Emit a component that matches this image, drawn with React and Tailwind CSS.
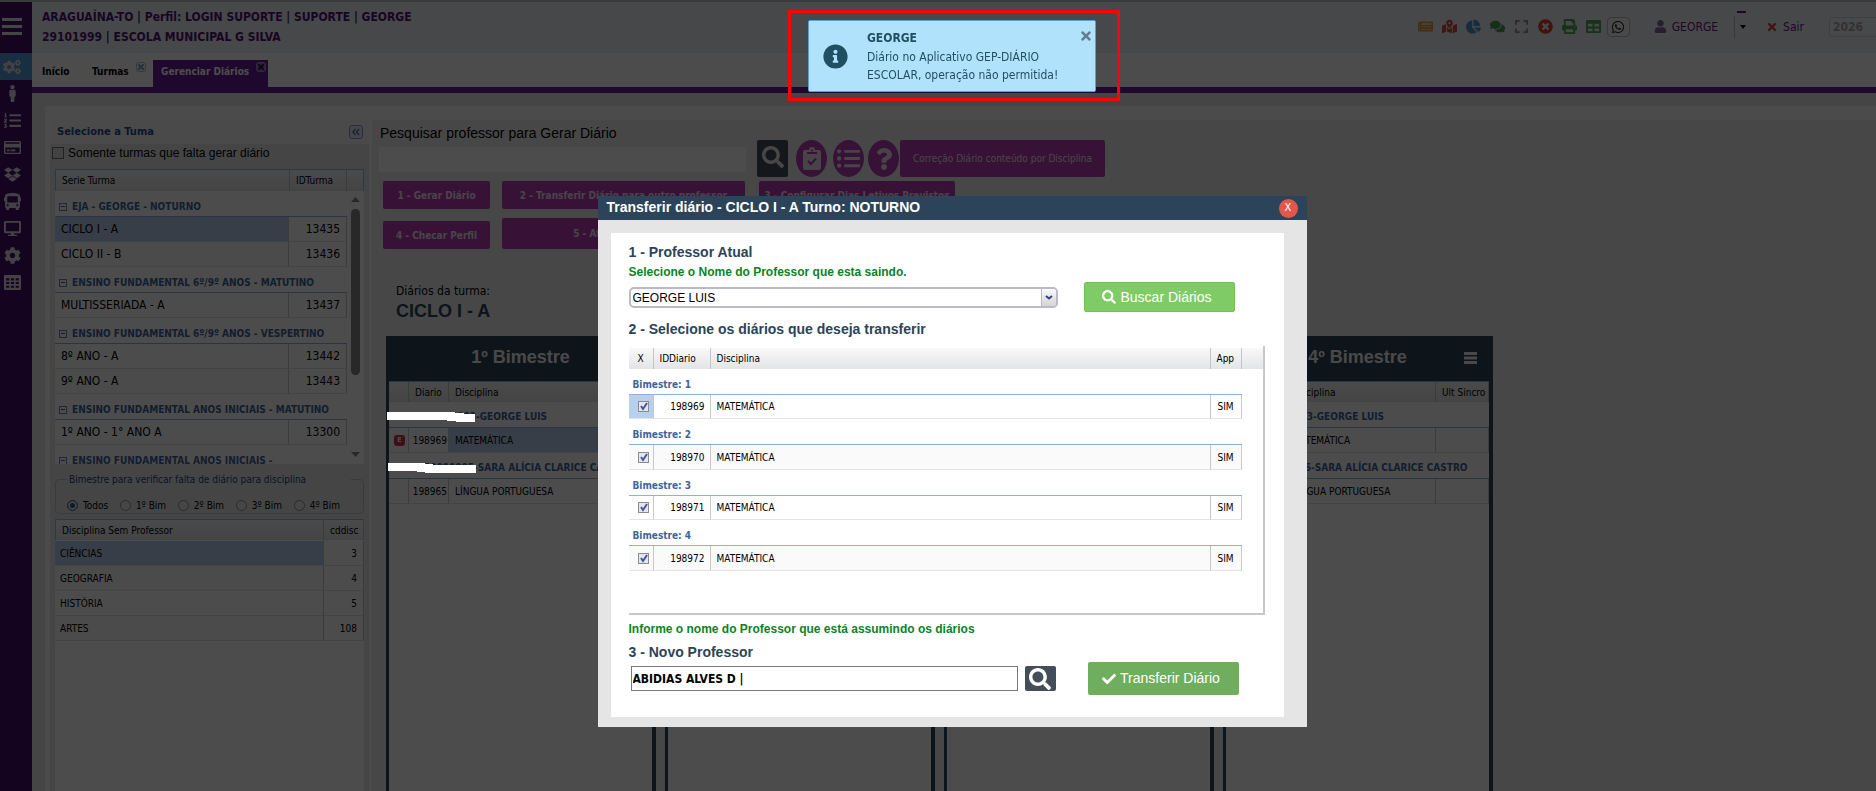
import React from "react";
import {
  FaCogs, FaMale, FaListOl, FaRegCreditCard, FaDropbox, FaBus, FaDesktop, FaCog, FaTable,
  FaNewspaper, FaMapMarkedAlt, FaChartPie, FaComments, FaExpand, FaTimesCircle, FaPrint,
  FaWhatsapp, FaUser, FaTimes, FaSearch, FaCheck, FaListUl, FaQuestion, FaInfoCircle,
} from "react-icons/fa";

const tahoma = "font-['DejaVu_Sans_Condensed','DejaVu_Sans',sans-serif]";
const arial = "font-['Liberation_Sans',Arial,sans-serif]";
const headCell = "h-[21px] border-r border-[#c5c5c5] bg-linear-to-b from-[#f9f9f9] to-[#e3e4e6] px-[6px] text-left font-normal whitespace-nowrap overflow-hidden";

function GridIcon({ size }) {
  return (
    <svg width={size} height={size} viewBox="0 0 16 16" aria-hidden="true">
      <path
        fill="currentColor"
        fillRule="evenodd"
        d="M1 1h14a1 1 0 0 1 1 1v12a1 1 0 0 1-1 1H1a1 1 0 0 1-1-1V2a1 1 0 0 1 1-1zM2 4v2h3V4zM6.500 4v2h3V4zM11 4v2h3V4zM2 7.500v2h3v-2zM6.500 7.500v2h3v-2zM11 7.500v2h3v-2zM2 11v2h3v-2zM6.500 11v2h3v-2zM11 11v2h3v-2z"
      />
    </svg>
  );
}

const sidebarItems = [
  { icon: FaCogs, label: "Configurações", active: true },
  { icon: FaMale, label: "Pessoas" },
  { icon: FaListOl, label: "Listas" },
  { icon: FaRegCreditCard, label: "Cartões" },
  { icon: FaDropbox, label: "Materiais" },
  { icon: FaBus, label: "Transporte" },
  { icon: FaDesktop, label: "Monitor" },
  { icon: FaCog, label: "Ajustes" },
  { icon: GridIcon, label: "Tabelas" },
];

const toolbar = [
  { icon: FaNewspaper, label: "Notícias", color: "text-[#e8973a]" },
  { icon: FaMapMarkedAlt, label: "Mapa", color: "text-[#d24a3c]" },
  { icon: FaChartPie, label: "Gráficos", color: "text-[#4f93c8]" },
  { icon: FaComments, label: "Mensagens", color: "text-[#4f9a58]" },
  { icon: FaExpand, label: "Tela cheia", color: "text-[#8c8c8c]" },
  { icon: FaTimesCircle, label: "Fechar", color: "text-[#dc3f2c]" },
  { icon: FaPrint, label: "Imprimir", color: "text-[#4fa35a]" },
  { icon: FaTable, label: "Planilha", color: "text-[#4fa35a]" },
];

const turmas = [
  { grupo: "EJA - GEORGE - NOTURNO", itens: [["CICLO I - A", "13435"], ["CICLO II - B", "13436"]] },
  { grupo: "ENSINO FUNDAMENTAL 6º/9º ANOS - MATUTINO", itens: [["MULTISSERIADA - A", "13437"]] },
  { grupo: "ENSINO FUNDAMENTAL 6º/9º ANOS - VESPERTINO", itens: [["8º ANO - A", "13442"], ["9º ANO - A", "13443"]] },
  { grupo: "ENSINO FUNDAMENTAL ANOS INICIAIS - MATUTINO", itens: [["1º ANO - 1° ANO A", "13300"]] },
  { grupo: "ENSINO FUNDAMENTAL ANOS INICIAIS -", itens: [] },
];

const disciplinas = [["CIÊNCIAS", "3"], ["GEOGRAFIA", "4"], ["HISTÓRIA", "5"], ["ARTES", "108"]];

function Sidebar() {
  return (
    <nav className="flex w-8 shrink-0 flex-col bg-[#46106a]">
      <button aria-label="Menu" className="flex h-[51px] items-center pb-[2px] pl-[2px] text-[#e6e6e6]">
        <svg width="20" height="18" viewBox="0 0 20 18" fill="currentColor">
          <rect width="20" height="3" /><rect y="7" width="20" height="3" /><rect y="14" width="20" height="3" />
        </svg>
      </button>
      {sidebarItems.map(({ icon: Icon, label, active }) => (
        <button
          key={label}
          aria-label={label}
          className={`flex h-[27px] items-center justify-center pr-2 text-[#e4d8ea] ${active ? "bg-[#4d9fd6]" : ""}`}
        >
          <Icon size={active ? 18 : 17} />
        </button>
      ))}
    </nav>
  );
}

function Header() {
  return (
    <header className={`flex h-[51px] shrink-0 items-center justify-between bg-[#eaf0f6] pb-[2px] ${tahoma}`}>
      <div className="pl-[10px] text-[12px] leading-5 font-bold whitespace-nowrap text-[#541277]">
        <p>ARAGUAÍNA-TO | Perfil: LOGIN SUPORTE | SUPORTE | GEORGE</p>
        <p>29101999 | ESCOLA MUNICIPAL G SILVA</p>
      </div>
      <div className="flex items-center text-[12px] text-[#7a0f80]">
        <div className="flex items-center gap-2">
          {toolbar.map(({ icon: Icon, label, color }) => (
            <button key={label} aria-label={label} className={`flex w-4 justify-center ${color}`}>
              <Icon size={15} />
            </button>
          ))}
        </div>
        <button aria-label="WhatsApp" className="ml-[5px] flex h-5 w-[23px] items-center justify-center rounded-sm border border-[#bbb] bg-[#f4f4f4] text-[#222]">
          <FaWhatsapp size={14} />
        </button>
        <button className="ml-6 flex items-center gap-[5px] whitespace-nowrap">
          <FaUser size={13} className="text-[#8a62a8]" />
          <span>GEORGE</span>
        </button>
        <button aria-label="Opções do usuário" className="relative ml-4 flex h-[22px] w-[14px] items-center border-l border-[#bbb] pl-[5px]">
          <span className="absolute -top-[5px] left-[2px] h-[2px] w-[9px] bg-[#7a0f80]" />
          <svg width="6" height="4" viewBox="0 0 6 4"><path d="M0 0h6L3 4z" fill="#000" /></svg>
        </button>
        <button className="ml-[18px] flex items-center gap-[5px]">
          <FaTimes size={12} className="text-[#d8452f]" />
          <span>Sair</span>
        </button>
        <input aria-label="Ano" defaultValue="2026" className="ml-[25px] h-5 w-[47px] rounded-l-sm border border-r-0 border-[#d0d4d8] bg-[#f2f4f7] px-[3px] font-bold text-[#a8a8a8]" />
      </div>
    </header>
  );
}

function TabClose({ dark }) {
  return (
    <span className={`flex size-[10px] shrink-0 items-center justify-center rounded-[3px] border ${dark ? "border-[#9a8db5] bg-[#8678a6] text-[#3c1057]" : "border-[#a9bed2] text-[#8aa2b8]"}`}>
      <svg width="6" height="6" viewBox="0 0 6 6" stroke="currentColor" strokeWidth="2"><path d="M0 0l6 6M6 0L0 6" /></svg>
    </span>
  );
}

function Tabs() {
  return (
    <div className={`flex h-10 shrink-0 items-end border-b-[6px] border-[#681c96] bg-white text-[10px] font-bold ${tahoma}`}>
      <button className="h-[27px] w-[50px] pb-[5px] pl-[10px] text-left">Início</button>
      <button className="flex h-[27px] w-[71px] items-start pt-[2px] pr-[7px] pl-[10px]"><span className="flex-1 pt-[2px] text-left">Turmas</span><TabClose /></button>
      <button className="flex h-[27px] w-[115px] items-start bg-[#681c96] pt-[2px] pr-[2px] pl-2 text-white"><span className="flex-1 pt-[2px] text-left whitespace-nowrap">Gerenciar Diários</span><TabClose dark /></button>
    </div>
  );
}

function TurmasTable() {
  return (
    <div className="mx-[5px] flex h-[295px] shrink-0 flex-col overflow-hidden bg-white">
      <table className="w-full table-fixed border-separate border-spacing-0 border border-b-0 border-[#9cb8dc] text-[10px]">
        <thead>
          <tr>
            <th className={headCell}>Serie Turma</th>
            <th className={`${headCell} w-[57px]`}>IDTurma</th>
            <th className={`${headCell} w-4 border-r-0`} aria-label="Rolagem" />
          </tr>
        </thead>
      </table>
      <div className="flex min-h-0 flex-1">
        <table className="w-full flex-1 table-fixed border-separate border-spacing-0 self-start">
          <colgroup><col /><col className="w-[58px]" /></colgroup>
          {turmas.map((t, g) => (
            <tbody key={t.grupo}>
              <tr>
                <th colSpan={2} className="h-[26px] border-b border-[#8fb0dd] pt-[6px] pl-1 text-left text-[10px] leading-4 font-bold whitespace-nowrap text-[#3d659c]">
                  <span className="mr-[5px] inline-flex size-2 items-center justify-center border border-[#6f87a8] align-middle"><span className="h-px w-1 bg-[#3d659c]" /></span>
                  {t.grupo}
                </th>
              </tr>
              {t.itens.map(([nome, id], i) => (
                <tr key={id} className="text-[12px]">
                  <td className={`h-[25px] border-r border-b border-[#e3e3e3] border-r-[#c8c8c8] px-[6px] ${g === 0 && i === 0 ? "bg-[#b8cfee]" : i === 1 ? "bg-[#fafafa]" : ""}`}>{nome}</td>
                  <td className="border-r border-b border-[#e3e3e3] border-r-[#c8c8c8] px-[6px] text-right">{id}</td>
                </tr>
              ))}
            </tbody>
          ))}
        </table>
        <div className="flex w-[17px] flex-col items-center pt-[6px] pb-[7px]">
          <svg width="9" height="5" viewBox="0 0 9 5"><path d="M0 5h9L4.500 0z" fill="#858585" /></svg>
          <div className="mt-[7px] h-[166px] w-[9px] rounded-full bg-[#858585]" />
          <svg className="mt-auto" width="9" height="5" viewBox="0 0 9 5"><path d="M0 0h9L4.500 5z" fill="#858585" /></svg>
        </div>
      </div>
    </div>
  );
}

function LeftPanel() {
  return (
    <aside className={`flex w-[319px] shrink-0 flex-col bg-[#e8e8e8] ${tahoma}`}>
      <div className="flex h-6 shrink-0 items-center justify-between bg-[#f7f7f7] pr-[6px] pl-[7px]">
        <h2 className="text-[11px] font-bold text-[#2a4d92]">Selecione a Tuma</h2>
        <button aria-label="Recolher" className="flex size-[14px] items-center justify-center rounded-[3px] border border-[#7f9fc4] bg-[#e4eef9] text-[#5b7da6]">
          <svg width="8" height="8" viewBox="0 0 8 8" fill="none" stroke="currentColor" strokeWidth="1.500"><path d="M3.500 1L1 4l2.500 3M7 1L4.500 4 7 7" /></svg>
        </button>
      </div>
      <label className={`flex h-[25px] shrink-0 items-start gap-1 pl-[2px] text-[12px] ${arial}`}>
        <input type="checkbox" className="mt-[3px] size-3 appearance-none border border-[#6f6f6f] bg-[#e2e2e2]" />
        Somente turmas que falta gerar diário
      </label>
      <TurmasTable />
      <fieldset className="mx-[5px] mt-2 h-[42px] min-w-0 shrink-0 rounded-sm border border-[#c0c4ca] px-[11px]">
        <legend className="w-[284px] px-[2px] text-[10px] whitespace-nowrap text-[#2c3f78]">Bimestre para verificar falta de diário para disciplina</legend>
        <div className="flex justify-between pt-[11px] pr-3 text-[10px]">
          {["Todos", "1º Bim", "2º Bim", "3º Bim", "4º Bim"].map((b, i) => (
            <label key={b} className="flex items-center gap-[5px] whitespace-nowrap">
              <input type="radio" name="bimestre" defaultChecked={i === 0} className="size-[11px] appearance-none rounded-full border border-[#909090] bg-[#ececec] checked:border-[#5f6f80] checked:bg-[#1d5f92] checked:shadow-[inset_0_0_0_2px_#dfe8ef]" />
              {b}
            </label>
          ))}
        </div>
      </fieldset>
      <div className="mx-[5px] mt-[5px] flex-1 bg-white text-[10px]">
        <table className="w-full table-fixed border-separate border-spacing-0">
          <thead>
            <tr>
              <th className={`${headCell} border-t border-l border-t-[#9cb8dc] border-l-[#9cb8dc]`}>Disciplina Sem Professor</th>
              <th className={`${headCell} w-10 border-t border-t-[#9cb8dc]`}>cddisc</th>
            </tr>
            <tr aria-hidden="true"><td colSpan={2} className="h-px" /></tr>
          </thead>
          <tbody>
            {disciplinas.map(([nome, id], i) => (
              <tr key={nome}>
                <td className={`h-[25px] border-r border-b border-[#e3e3e3] border-r-[#c8c8c8] px-[5px] ${i === 0 ? "bg-[#b8cfee]" : i % 2 ? "bg-[#fafafa]" : ""}`}>{nome}</td>
                <td className="border-r border-b border-[#e3e3e3] border-r-[#c8c8c8] px-[6px] text-right">{id}</td>
              </tr>
            ))}
          </tbody>
        </table>
      </div>
    </aside>
  );
}

function PurpleButton({ className, children }) {
  return (
    <button className={`overflow-hidden rounded-[2px] bg-[#b83eb4] text-[10px] font-bold whitespace-nowrap text-[#f2e3f2] ${className}`}>{children}</button>
  );
}

function BimestrePanel({ numero, selected }) {
  const grupos = [
    { cod: "000000000003", nome: "-GEORGE LUIS", id: "198969", disc: "MATEMÁTICA", erro: selected, largura: "w-[83px]" },
    { cod: "000000000005", nome: "-SARA ALÍCIA CLARICE CASTRO", id: "198965", disc: "LÍNGUA PORTUGUESA", largura: "w-[81px]" },
  ];
  return (
    <section className="flex w-[270px] shrink-0 flex-col border-r-4 border-l-[3px] border-[#2c4459] bg-white">
      <div className={`relative flex h-[45px] items-center justify-center bg-[#2c4459] pb-[3px] text-[18px] font-bold text-[#f4f4f4] ${arial}`}>
        <h3>{numero}º Bimestre</h3>
        <button aria-label={`Opções do ${numero}º Bimestre`} className="absolute top-4 right-3">
          <svg width="13" height="12" viewBox="0 0 13 12" fill="currentColor">
            <rect width="13" height="3" /><rect y="4.500" width="13" height="3" /><rect y="9" width="13" height="3" />
          </svg>
        </button>
      </div>
      <table className="w-full table-fixed border-separate border-spacing-0 text-[10px]">
        <thead>
          <tr>
            <th className={`${headCell} w-5 border-t border-t-[#8fb0dd]`} aria-label="Situação" />
            <th className={`${headCell} w-10 border-t border-t-[#8fb0dd]`}>Diario</th>
            <th className={`${headCell} border-t border-t-[#8fb0dd]`}>Disciplina</th>
            <th className={`${headCell} w-[53px] border-t border-t-[#8fb0dd]`}>Ult Sincro</th>
          </tr>
        </thead>
        {grupos.map((g) => (
          <tbody key={g.id}>
            <tr>
              <th colSpan={4} className="h-[26px] overflow-hidden border-b border-[#8fb0dd] pt-1 pl-1 text-left font-bold whitespace-nowrap text-[#3d659c]">
                <span className={`inline-block text-right ${g.largura}`}>{g.cod}</span>{g.nome}
              </th>
            </tr>
            <tr>
              <td className="h-[25px] border-r border-b border-[#e3e3e3] border-r-[#c8c8c8] pl-[5px]">
                {g.erro && <span className="flex size-[11px] items-center justify-center rounded-[3px] bg-[#d8304a] text-[7px] font-bold text-white">E</span>}
              </td>
              <td className="border-r border-b border-[#e3e3e3] border-r-[#c8c8c8] pr-px text-right">{g.id}</td>
              <td className={`border-r border-b border-[#e3e3e3] border-r-[#c8c8c8] px-[6px] ${g.erro ? "bg-[#b8cfee]" : ""}`}>{g.disc}</td>
              <td className="border-r border-b border-[#e3e3e3] border-r-[#c8c8c8]" />
            </tr>
          </tbody>
        ))}
      </table>
    </section>
  );
}

function Main() {
  const round = "flex h-[37px] w-[31px] items-center justify-center rounded-[50%] bg-[#b83eb4] text-[#efe0ef]";
  return (
    <main className={`flex min-w-0 flex-1 flex-col overflow-hidden bg-[#efefef] pt-1 pl-[7px] ${tahoma}`}>
      <div className="flex h-[53px] shrink-0 items-end">
        <div className="mr-[11px] flex w-[367px] flex-col self-start">
          <label htmlFor="busca" className={`h-[23px] pl-px text-[14px] leading-[18px] ${arial}`}>Pesquisar professor para Gerar Diário</label>
          <input id="busca" className="h-[25px] bg-white px-1" />
        </div>
        <button aria-label="Pesquisar" className="flex h-[37px] w-[31px] items-center justify-center rounded-[2px] bg-[#434e5a] pb-1 text-[#eee]"><FaSearch size={22} /></button>
        <button aria-label="Verificar" className={`ml-2 ${round}`}>
          <svg width="18" height="23" viewBox="0 0 18 23">
            <path fill="currentColor" d="M2 3h4a3 3 0 0 1 6 0h4a2 2 0 0 1 2 2v16a2 2 0 0 1-2 2H2a2 2 0 0 1-2-2V5a2 2 0 0 1 2-2z" />
            <circle cx="9" cy="3.500" r="1" fill="#b83eb4" />
            <path d="M4 6h10M5 14l3 3 5-5.500" fill="none" stroke="#b83eb4" strokeWidth="2" />
          </svg>
        </button>
        <button aria-label="Listar" className={`ml-[6px] ${round}`}><FaListUl size={23} /></button>
        <button aria-label="Ajuda" className={`ml-1 ${round}`}><FaQuestion size={22} /></button>
        <button className="ml-px h-[37px] w-[205px] rounded-[2px] bg-[#b83eb4] text-[10px] text-[#f2e3f2]">Correção Diário conteúdo por Disciplina</button>
      </div>
      <div className="mt-1 flex shrink-0 pl-1">
        <PurpleButton className="mr-3 h-7 w-[107px]">1 - Gerar Diário</PurpleButton>
        <PurpleButton className="mr-[14px] h-7 w-[243px]">2 - Transferir Diário para outro professor</PurpleButton>
        <PurpleButton className="h-7 w-[196px]">3 - Configurar Dias Letivos Previstos</PurpleButton>
      </div>
      <div className="mt-[9px] flex shrink-0 items-end pl-1">
        <PurpleButton className="mr-3 h-7 w-[107px]">4 - Checar Perfil</PurpleButton>
        <PurpleButton className="h-[31px] w-[243px]">5 - Atualizar Diários</PurpleButton>
      </div>
      <div className="mt-[34px] shrink-0 pl-[17px]">
        <p className="text-[12px] leading-4">Diários da turma:</p>
        <p className={`text-[18px] leading-6 font-bold text-[#2c4459] ${arial}`}>CICLO I - A</p>
      </div>
      <div className="mt-[13px] flex min-h-0 flex-1 gap-[9px] pl-[7px]">
        <BimestrePanel numero={1} selected />
        <BimestrePanel numero={2} />
        <BimestrePanel numero={3} />
        <BimestrePanel numero={4} />
      </div>
    </main>
  );
}

function Toast() {
  return (
    <div className={`absolute top-[10px] left-[788px] border-[3px] border-[#fb0404] pt-[7px] pr-[21px] pb-[6px] pl-[17px] ${tahoma}`}>
      <div role="alert" className="flex h-[72px] w-[288px] items-center rounded-[2px] border border-[#5f9fd6] bg-[#b1e2fc] pr-[2px] pl-[14px] text-[#1f4f60]">
        <FaInfoCircle size={25} className="shrink-0" />
        <div className="ml-[19px] flex-1 pt-px text-[12px] leading-[18px] whitespace-nowrap">
          <p className="pb-px font-bold">GEORGE</p>
          <p>Diário no Aplicativo GEP-DIÁRIO</p>
          <p>ESCOLAR, operação não permitida!</p>
        </div>
        <button aria-label="Fechar aviso" className="mt-2 self-start text-[#5f7f8e]"><FaTimes size={14} /></button>
      </div>
    </div>
  );
}

function DiariosTable() {
  const cell = "border-r border-b border-[#e3e3e3] border-r-[#c8c8c8]";
  return (
    <div className={`mt-[7px] h-[269px] w-[636px] border-r-2 border-b-2 border-[#c8c8c8] pt-[2px] text-[10px] ${tahoma}`}>
      <table className="w-full table-fixed border-separate border-spacing-0">
        <thead>
          <tr>
            <th className={`${headCell} w-[25px]`}><span className="pl-[3px]">X</span></th>
            <th className={`${headCell} w-[57px]`}>IDDiario</th>
            <th className={headCell}>Disciplina</th>
            <th className={`${headCell} w-[31px]`}>App</th>
            <th className={`${headCell} w-[21px] border-r-0`} aria-label="Rolagem" />
          </tr>
        </thead>
        {["198969", "198970", "198971", "198972"].map((id, i) => (
          <tbody key={id}>
            <tr>
              <th colSpan={4} className="h-[26px] border-b border-[#8fb0dd] pt-[5px] pl-1 text-left font-bold text-[#3d659c]">Bimestre: {i + 1}</th>
            </tr>
            <tr className={i % 2 ? "bg-[#fafafa]" : ""}>
              <td className={`${i % 2 ? "h-[25px]" : "h-6"} ${cell} ${i === 0 ? "bg-[#b8cfee]" : ""}`}>
                <label className="relative ml-[9px] block size-[11px]">
                  <input type="checkbox" defaultChecked aria-label={`Diário ${id}`} className="block size-[11px] appearance-none border border-[#8c8c8c] bg-[#e4e6ee]" />
                  <svg className="pointer-events-none absolute inset-0" width="11" height="11" viewBox="0 0 11 11" fill="none" stroke="#4a55a2" strokeWidth="2"><path d="M3 5l2 3 4-6" /></svg>
                </label>
              </td>
              <td className={`${cell} pr-[5px] text-right`}>{id}</td>
              <td className={`${cell} px-[6px]`}>MATEMÁTICA</td>
              <td className={`${cell} text-center`}>SIM</td>
            </tr>
          </tbody>
        ))}
      </table>
    </div>
  );
}

function Modal() {
  const step = "text-[14px] leading-5 font-bold text-[#2c4459]";
  const hint = "text-[12px] leading-5 font-bold text-[#0a8426]";
  return (
    <div role="dialog" aria-label="Transferir diário" className={`w-[709px] max-w-full bg-[#e5e5e5] ${arial}`}>
      <div className="flex h-6 items-center justify-between bg-[#2c4459] pr-[9px] pl-[9px]">
        <h2 className="pb-[2px] text-[14px] font-bold text-white">Transferir diário - CICLO I - A Turno: NOTURNO</h2>
        <button aria-label="Fechar" className={`flex size-[19px] items-center justify-center rounded-full bg-[#e0584a] text-[11px] text-white ${tahoma}`}>X</button>
      </div>
      <div className="pt-[13px] pr-[23px] pb-[10px] pl-[13px]">
        <div className="h-[484px] bg-white pt-[9px] pl-[18px]">
          <h3 className={step}>1 - Professor Atual</h3>
          <p className={hint}><label htmlFor="atual">Selecione o Nome do Professor que esta saindo.</label></p>
          <div className="flex items-center">
            <div className="relative w-[429px]">
              <select id="atual" className="block h-[21px] w-full appearance-none rounded-[5px] border-2 border-[#b9b9c9] bg-white pl-[2px] text-[12px] text-black">
                <option>GEORGE LUIS</option>
              </select>
              <span className="pointer-events-none absolute top-[2px] right-[2px] flex h-[17px] w-[15px] items-center justify-center rounded-r-[3px] border-l border-[#b9b9c9] bg-linear-to-b from-[#fafafa] to-[#d5d5d5]">
                <svg width="8" height="5" viewBox="0 0 8 5" fill="none" stroke="#35437f" strokeWidth="2"><path d="M1 1l3 2.500L7 1" /></svg>
              </span>
            </div>
            <button className="ml-[26px] flex h-[30px] w-[151px] items-center justify-center gap-1 rounded-[2px] border border-[#74c058] bg-[#7fcb65] pr-1 text-[14px] text-white">
              <FaSearch size={14} />Buscar Diários
            </button>
          </div>
          <h3 className={`mt-[7px] ${step}`}>2 - Selecione os diários que deseja transferir</h3>
          <DiariosTable />
          <p className={`mt-1 ${hint}`}>Informe o nome do Professor que está assumindo os diários</p>
          <h3 className={`mt-[3px] ${step}`}><label htmlFor="novo">3 - Novo Professor</label></h3>
          <div className="flex items-center pl-[2px]">
            <input id="novo" defaultValue="ABIDIAS ALVES D |" className={`h-[25px] w-[387px] border border-[#777] bg-white px-px text-[12px] font-bold text-black ${tahoma}`} />
            <button aria-label="Pesquisar professor" className="ml-[7px] flex h-[25px] w-[31px] items-center justify-center rounded-[2px] bg-[#434e5a] text-white"><FaSearch size={22} /></button>
            <button className="ml-8 flex h-[33px] w-[151px] items-center justify-center gap-1 rounded-[2px] bg-[#6fae5e] pr-1 text-[14px] text-white">
              <FaCheck size={14} />Transferir Diário
            </button>
          </div>
        </div>
      </div>
    </div>
  );
}

export default function App() {
  return (
    <div className="relative flex h-screen flex-col overflow-hidden border-t-2 border-[#c4c4c4] bg-white text-black">
      <div className="flex min-h-0 flex-1">
        <Sidebar />
        <div className="flex min-w-0 flex-1 flex-col">
          <Header />
          <Tabs />
          <div className="flex min-h-0 flex-1 flex-col bg-[#e7e7e7] pt-[13px] pl-[13px]">
            <div className="flex min-h-0 flex-1 gap-[3px] bg-[#fbfbfb] pt-[14px] pl-[5px]">
              <LeftPanel />
              <Main />
            </div>
          </div>
        </div>
      </div>
      <div className="fixed inset-0 flex items-start justify-center bg-black/70 pt-[196px] pl-7">
        <Modal />
        <Toast />
        <svg className="absolute top-[411px] left-[386px]" width="92" height="64" viewBox="0 0 92 64" fill="#fff">
          <path d="M1 1h68v1h9v1h11v8H70v-1h-9v-1H1zM2 52h37v1h8v1h43v8H39v-1h-8v-1H2z" />
        </svg>
      </div>
    </div>
  );
}
